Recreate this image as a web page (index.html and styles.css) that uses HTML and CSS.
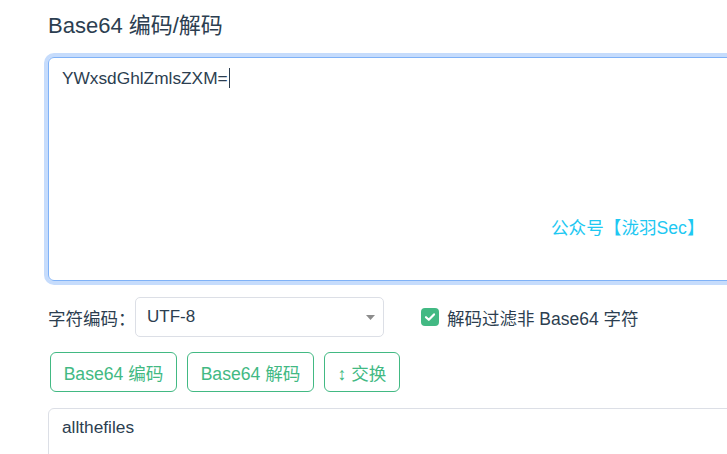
FILE: index.html
```html
<!DOCTYPE html>
<html lang="zh-CN">
<head>
<meta charset="utf-8">
<title>Base64 编码/解码</title>
<link rel="stylesheet" href="styles.css">
</head>
<body>
<main class="page">
  <h1 class="title">Base64 编码/解码</h1>
  <div class="input-wrap">
    <div class="textbox focused">YWxsdGhlZmlsZXM=<span class="caret"></span></div>
    <span class="watermark">公众号【泷羽Sec】</span>
  </div>
  <div class="options">
    <span class="label">字符编码：</span>
    <div class="select">
      <span>UTF-8</span>
      <svg class="arrow" width="9" height="5" viewBox="0 0 9 5"><path d="M0 0H9L4.5 5Z" fill="#8c8c8c"/></svg>
    </div>
    <label class="check">
      <span class="box"><svg width="12" height="10" viewBox="0 0 12 10"><path d="M2 5.2L4.8 7.8L10 2.4" fill="none" stroke="#fff" stroke-width="2.2" stroke-linecap="round" stroke-linejoin="round"/></svg></span>
      <span>解码过滤非 Base64 字符</span>
    </label>
  </div>
  <div class="actions">
    <button class="btn wide">Base64 编码</button>
    <button class="btn wide">Base64 解码</button>
    <button class="btn swap">↕ 交换</button>
  </div>
  <div class="textbox output">allthefiles</div>
</main>
</body>
</html>
```
FILE: styles.css
```css
html, body {
  margin: 0;
  padding: 0;
  overflow: hidden;
  background: #fff;
}
body {
  font-family: "Liberation Sans", "Noto Sans CJK SC", sans-serif;
  color: #2c3e50;
}
.page {
  width: 1000px;
  padding: 12px 0 0 48px;
  display: flex;
  flex-direction: column;
}
.title {
  margin: 0;
  font-size: 22px;
  font-weight: 400;
  line-height: 28px;
  color: #2c3e50;
}
.input-wrap {
  position: relative;
  margin-top: 17px;
}
.textbox {
  box-sizing: border-box;
  border: 1px solid #dcdfe6;
  border-radius: 6px;
  padding: 8px 13px;
  font-size: 17.3px;
  line-height: 24px;
  color: #2c3e50;
}
.focused {
  height: 224px;
  border-color: #80b2f7;
  box-shadow: 0 0 0 4px #c6dcfc;
}
.caret {
  display: inline-block;
  width: 1px;
  height: 20px;
  background: #2c3e50;
  vertical-align: -4px;
  margin-left: 1px;
}
.watermark {
  position: absolute;
  left: 503px;
  top: 161px;
  font-size: 17.6px;
  line-height: 20px;
  color: #1ec8f2;
  white-space: nowrap;
}
.options {
  display: flex;
  align-items: center;
  margin-top: 16px;
  height: 40px;
  font-size: 17.5px;
}
.label {
  width: 87px;
  white-space: nowrap;
}
.select {
  box-sizing: border-box;
  width: 249px;
  height: 40px;
  border: 1px solid #dcdfe6;
  border-radius: 5px;
  padding: 0 8px 0 11px;
  display: flex;
  align-items: center;
  justify-content: space-between;
  color: #2c3e50;
  font-size: 17px;
}
.arrow {
  display: block;
}
.check {
  display: flex;
  align-items: center;
  margin-left: 37px;
  gap: 8px;
}
.box {
  width: 18px;
  height: 18px;
  border-radius: 4px;
  background: #42b983;
  display: flex;
  align-items: center;
  justify-content: center;
}
.actions {
  display: flex;
  gap: 10px;
  margin-top: 15px;
  padding-left: 2px;
}
.btn {
  box-sizing: border-box;
  height: 40px;
  padding: 0;
  border: 1px solid #42b983;
  border-radius: 6px;
  background: #fff;
  color: #42b983;
  font-family: "Liberation Sans", "Noto Sans CJK SC", sans-serif;
  font-size: 17.6px;
}
.btn.wide {
  width: 127px;
}
.btn.swap {
  width: 76px;
}
.output {
  margin-top: 16px;
  height: 80px;
  padding-top: 6px;
}
```
